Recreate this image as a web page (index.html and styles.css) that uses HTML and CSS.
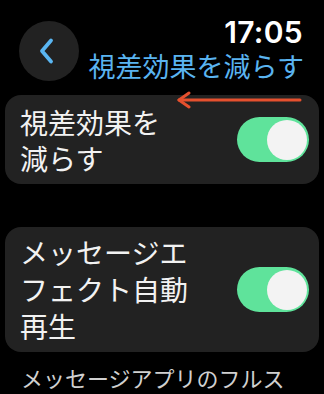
FILE: index.html
```html
<!DOCTYPE html>
<html lang="ja">
<head>
<meta charset="utf-8">
<link rel="stylesheet" href="styles.css">
</head>
<body>
<div class="screen">
  <header class="header">
    <div class="back">
      <svg width="18" height="28" viewBox="0 0 18 28"><polyline points="13,3.5 4,14 13,24.5" fill="none" stroke="#5ab6f2" stroke-width="3.8" stroke-linecap="round" stroke-linejoin="round"/></svg>
    </div>
    <div class="titles">
      <div class="time">17:05</div>
      <div class="title">視差効果を減らす</div>
    </div>
  </header>
  <div class="card card-first">
    <div class="label">視差効果を<br>減らす</div>
    <div class="toggle"><div class="knob"></div></div>
  </div>
  <div class="card card-second">
    <div class="label">メッセージエ<br>フェクト自動<br>再生</div>
    <div class="toggle"><div class="knob"></div></div>
  </div>
  <div class="footnote">メッセージアプリのフルスクリーンエフェクトを自動的に再生します。</div>
  <svg class="arrow" width="128" height="18" viewBox="0 0 128 18"><line x1="4" y1="9" x2="125" y2="9" stroke="#e5502e" stroke-width="3" stroke-linecap="round"/><polyline points="14,2 4,9 14,16" fill="none" stroke="#e5502e" stroke-width="3" stroke-linecap="round" stroke-linejoin="round"/></svg>
</div>
</body>
</html>
```
FILE: styles.css
```css
html, body {
  margin: 0;
  padding: 0;
  background: #000;
}
.screen {
  position: relative;
  width: 324px;
  height: 394px;
  overflow: hidden;
  background: #000;
  font-family: "Noto Sans CJK JP", "Noto Sans", sans-serif;
  color: #f2f2f2;
}
.header {
  display: flex;
  justify-content: space-between;
  align-items: flex-start;
  padding: 14px 21px 0 19px;
  height: 81px;
}
.back {
  width: 60px;
  height: 60px;
  border-radius: 50%;
  background: #222;
  margin-top: 7px;
  display: flex;
  align-items: center;
  justify-content: center;
}
.back svg {
  margin-left: -5px;
}
.titles {
  display: flex;
  flex-direction: column;
  align-items: flex-end;
}
.time {
  font-family: "Inter", "Roboto", sans-serif;
  font-weight: 600;
  font-size: 30px;
  line-height: 36px;
  color: #fff;
  letter-spacing: 0.3px;
}
.title {
  font-size: 27px;
  line-height: 32px;
  color: #5ab4f0;
  margin-right: -1px;
}
.card {
  margin: 0 5px;
  background: #222;
  border-radius: 16px;
  display: flex;
  align-items: center;
  justify-content: space-between;
  padding: 8px 10px 8px 15px;
}
.card-first {
  height: 73px;
}
.card-second {
  margin-top: 43px;
  height: 109px;
}
.label {
  font-size: 28px;
  line-height: 36px;
  color: #f2f2f2;
}
.card-second .label {
  line-height: 37px;
}
.toggle {
  width: 72px;
  height: 45px;
  border-radius: 23px;
  background: #5fe39b;
  display: flex;
  align-items: center;
  justify-content: flex-end;
  padding-right: 2px;
  box-sizing: border-box;
}
.knob {
  width: 40px;
  height: 40px;
  border-radius: 50%;
  background: #f3f3f3;
}
.footnote {
  margin: 10px 0 0 21px;
  width: 270px;
  font-size: 22px;
  line-height: 30px;
  color: #d0d0d0;
}
.arrow {
  position: absolute;
  left: 175px;
  top: 91px;
}
```
